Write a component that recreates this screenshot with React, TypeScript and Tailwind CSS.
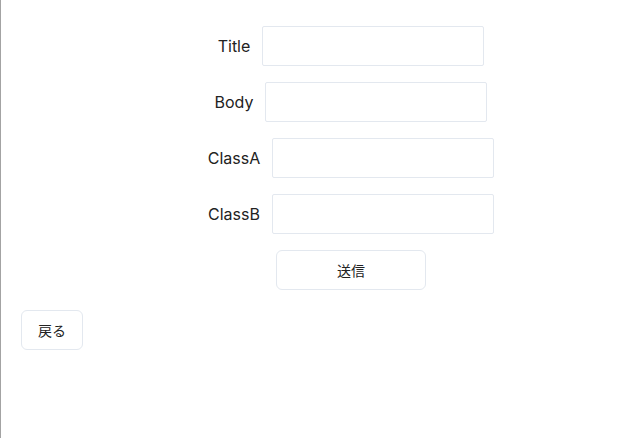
import React from "react";

const rows = [
  { label: "Title" },
  { label: "Body" },
  { label: "ClassA" },
  { label: "ClassB" },
];

export default function App() {
  return (
    <div
      className="w-[639px] h-[438px] bg-white border-l border-[#a3a3a3] text-[#222]"
      style={{ fontFamily: 'Inter, "Noto Sans CJK JP", sans-serif' }}
    >
      <div className="flex flex-col items-center pt-[26px] pl-[62px] gap-4">
        {rows.map((r) => (
          <div key={r.label} className="flex items-center gap-3 h-10">
            <span className="text-[16px] leading-none">{r.label}</span>
            <input className="w-[222px] h-10 border border-[#e3e8ef] rounded-[2px] outline-none px-2" />
          </div>
        ))}
        <button className="w-[150px] h-10 border border-[#e3e8ef] rounded-md text-[14px] text-[#222]">
          送信
        </button>
      </div>
      <div className="pl-5 pt-5">
        <button className="w-[62px] h-10 border border-[#e3e8ef] rounded-md text-[14px] text-[#222]">
          戻る
        </button>
      </div>
    </div>
  );
}
